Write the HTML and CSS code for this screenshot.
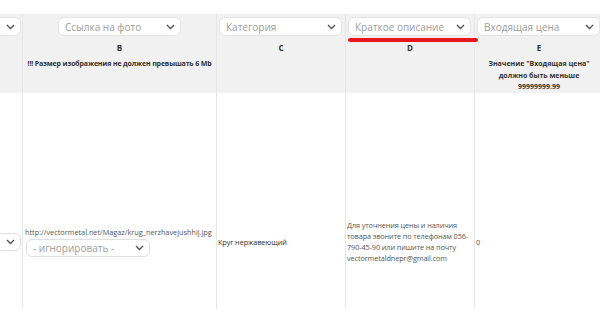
FILE: index.html
```html
<!DOCTYPE html>
<html lang="ru">
<head>
  <meta charset="UTF-8" />
  <meta name="viewport" content="width=device-width, initial-scale=1.0"/>
  <title>Импорт товаров</title>
  <link rel="stylesheet" href="styles.css">
</head>
<body>
  <div class="top-space"></div>
  <div class="sheet">
    <div class="col col-a">
      <div class="head">
        <div class="select">
          <span class="ph"></span>
          <svg class="chev" width="9" height="6" viewBox="0 0 9 6"><polyline points="1,1 4.5,4.5 8,1"/></svg>
        </div>
      </div>
      <div class="cell">
        <div class="select row-select">
          <span class="ph"></span>
          <svg class="chev" width="9" height="6" viewBox="0 0 9 6"><polyline points="1,1 4.5,4.5 8,1"/></svg>
        </div>
      </div>
    </div>

    <div class="col col-b">
      <div class="head">
        <div class="select">
          <span class="ph">Ссылка на фото</span>
          <svg class="chev" width="9" height="6" viewBox="0 0 9 6"><polyline points="1,1 4.5,4.5 8,1"/></svg>
        </div>
        <div class="letter">B</div>
        <div class="note">!!! Размер изображения не должен превышать 6 Mb</div>
      </div>
      <div class="cell">
        <div class="cell-stack">
          <div class="url">http://vectormetal.net/Magaz/krug_nerzhavejushhij.jpg</div>
          <div class="select row-select">
            <span class="ph">- игнорировать -</span>
            <svg class="chev" width="9" height="6" viewBox="0 0 9 6"><polyline points="1,1 4.5,4.5 8,1"/></svg>
          </div>
        </div>
      </div>
    </div>

    <div class="col">
      <div class="head">
        <div class="select">
          <span class="ph">Категория</span>
          <svg class="chev" width="9" height="6" viewBox="0 0 9 6"><polyline points="1,1 4.5,4.5 8,1"/></svg>
        </div>
        <div class="letter">C</div>
      </div>
      <div class="cell">
        <div class="text dark">Круг нержавеющий</div>
      </div>
    </div>

    <div class="col">
      <div class="head">
        <div class="select marked">
          <span class="ph">Краткое описание</span>
          <svg class="chev" width="9" height="6" viewBox="0 0 9 6"><polyline points="1,1 4.5,4.5 8,1"/></svg>
        </div>
        <div class="letter">D</div>
      </div>
      <div class="cell">
        <div class="text">Для уточнения цены и наличия товара звоните по телефонам 056-790-45-90 или пишите на почту vectormetaldnepr@gmail.com</div>
      </div>
    </div>

    <div class="col">
      <div class="head">
        <div class="select">
          <span class="ph">Входящая цена</span>
          <svg class="chev" width="9" height="6" viewBox="0 0 9 6"><polyline points="1,1 4.5,4.5 8,1"/></svg>
        </div>
        <div class="letter">E</div>
        <div class="note">Значение "Входящая цена" должно быть меньше 99999999.99</div>
      </div>
      <div class="cell">
        <div class="text">0</div>
      </div>
    </div>
  </div>
</body>
</html>
```

FILE: styles.css
```css
* {
  box-sizing: border-box;
}
html, body {
  height: 309px;
  overflow: hidden;
}
body {
  margin: 0;
  background: #fff;
  font-family: 'Open Sans', sans-serif;
  color: #444;
}
.top-space {
  height: 14px;
}
.sheet {
  display: flex;
  width: 620px;
}
.col {
  width: 129px;
  flex-shrink: 0;
  border-left: 1px solid #e6e6e6;
}
.col-a {
  width: 22px;
  border-left: none;
  overflow: hidden;
}
.col-b {
  width: 194px;
}
.head {
  height: 79px;
  background: #f1f1f1;
  padding: 3px 2px 0 2px;
  text-align: center;
}
.col-a .head {
  display: flex;
  justify-content: flex-end;
  align-items: flex-start;
  padding-right: 1px;
}
.select {
  position: relative;
  display: flex;
  flex-shrink: 0;
  align-items: center;
  justify-content: space-between;
  width: 123px;
  height: 19px;
  padding: 0 5px 0 6px;
  background: #fff;
  border: 1px solid #e4e4e4;
  border-radius: 6px;
  text-align: left;
}
.col-b .head .select {
  margin: 0 auto;
}
.ph {
  font-size: 10px;
  color: #9c9c9c;
  white-space: nowrap;
}
.chev polyline {
  fill: none;
  stroke: #555;
  stroke-width: 1.4;
}
.marked::after {
  content: '';
  position: absolute;
  left: -1px;
  top: calc(100% + 3px);
  width: 130px;
  height: 4px;
  border-radius: 2px;
  background: #e8151b;
}
.letter {
  margin-top: 6px;
  font-size: 8px;
  line-height: 12px;
  font-weight: bold;
  color: #333;
}
.note {
  margin-top: 4px;
  font-size: 7px;
  line-height: 11.5px;
  font-weight: bold;
  letter-spacing: -0.15px;
  color: #333;
  white-space: nowrap;
}
.col:last-child .note {
  white-space: normal;
  letter-spacing: 0;
  padding: 0 6px;
}
.cell {
  height: 298px;
  display: flex;
  align-items: center;
  padding: 0 1px;
}
.col-a .cell {
  justify-content: flex-end;
  padding: 0 1px 0 0;
}
.row-select {
  height: 18px;
  width: 124px;
  border-color: #e0e0e0;
}
.cell-stack .row-select {
  margin-left: 2px;
}
.url {
  font-size: 7.3px;
  line-height: 11px;
  color: #555;
  white-space: nowrap;
  margin-bottom: 1px;
  padding-left: 1px;
}
.text {
  font-size: 7.3px;
  line-height: 11px;
  letter-spacing: -0.1px;
  color: #555;
}
.text.dark {
  color: #333;
}
```
